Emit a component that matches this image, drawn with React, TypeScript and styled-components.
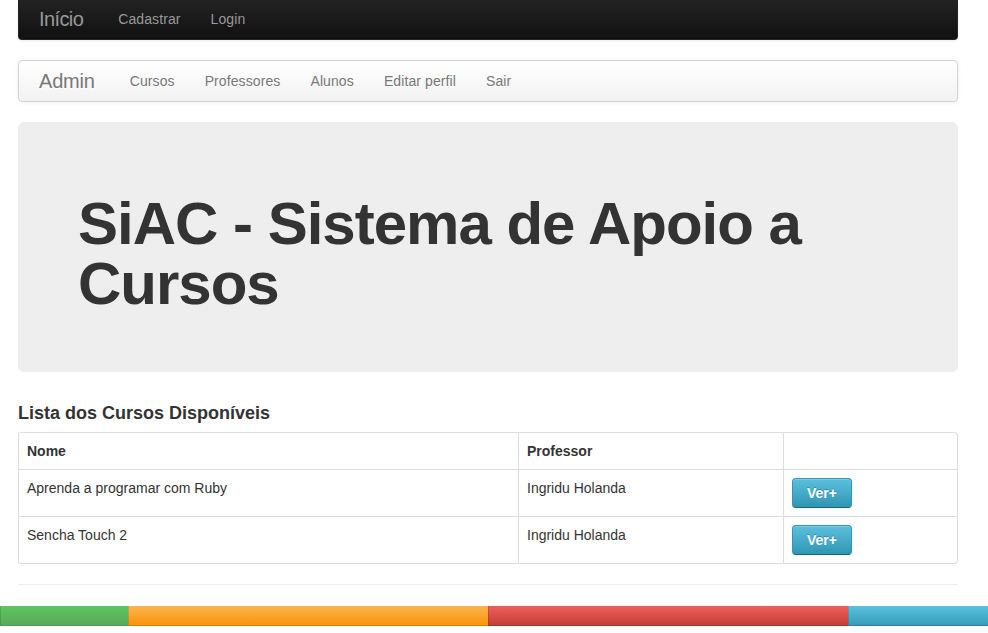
import React from "react";
import styled, { createGlobalStyle } from "styled-components";

const Global = createGlobalStyle`
  html, body { margin: 0; padding: 0; background: #fff; }
  body {
    font-family: "Liberation Sans", Arial, Helvetica, sans-serif;
    font-size: 14px;
    line-height: 20px;
    color: #333;
  }
  * { box-sizing: border-box; }
`;

const Page = styled.div`
  width: 988px;
  overflow: hidden;
`;

const Container = styled.div`
  width: 940px;
  margin: 0 18px;
`;

const Navbar = styled.nav<{ $inverse?: boolean }>`
  display: flex;
  align-items: center;
  height: ${(p) => (p.$inverse ? "40px" : "42px")};
  padding: 0 20px;
  margin-bottom: 20px;
  border: 1px solid ${(p) => (p.$inverse ? "#252525" : "#d4d4d4")};
  border-radius: ${(p) => (p.$inverse ? "0 0 4px 4px" : "4px")};
  border-top-width: ${(p) => (p.$inverse ? "0" : "1px")};
  background: ${(p) =>
    p.$inverse
      ? "linear-gradient(to bottom, #222222, #111111)"
      : "linear-gradient(to bottom, #ffffff, #f2f2f2)"};
  box-shadow: ${(p) =>
    p.$inverse ? "0 1px 3px rgba(0,0,0,0.08)" : "0 1px 4px rgba(0,0,0,0.065)"};
`;

const Brand = styled.a<{ $inverse?: boolean; $ls: number }>`
  font-size: 20px;
  font-weight: 200;
  line-height: 20px;
  letter-spacing: ${(p) => p.$ls}px;
  color: ${(p) => (p.$inverse ? "#999" : "#777")};
  text-decoration: none;
  margin-top: ${(p) => (p.$inverse ? "-1px" : "0")};
  margin-right: 20px;
  text-shadow: ${(p) => (p.$inverse ? "none" : "0 1px 0 #fff")};
`;

const NavLink = styled.a<{ $inverse?: boolean }>`
  padding: 10px 15px;
  margin-top: ${(p) => (p.$inverse ? "-1px" : "0")};
  font-size: 14px;
  line-height: 20px;
  letter-spacing: 0.1px;
  color: ${(p) => (p.$inverse ? "#999" : "#777")};
  text-decoration: none;
  text-shadow: ${(p) => (p.$inverse ? "none" : "0 1px 0 #fff")};
`;

const Hero = styled.div`
  height: 250px;
  padding: 72px 60px 0;
  margin-bottom: 30px;
  background: #eeeeee;
  border-radius: 6px;
`;

const HeroTitle = styled.h1`
  margin: 0;
  font-size: 60px;
  line-height: 60px;
  font-weight: bold;
  letter-spacing: -1px;
  color: #333;
`;

const SectionTitle = styled.h4`
  margin: 0 0 10px;
  padding-top: 1px;
  height: 20px;
  font-size: 18px;
  line-height: 20px;
  font-weight: bold;
  color: #333;
`;

const Table = styled.table`
  width: 100%;
  table-layout: fixed;
  border-collapse: separate;
  border-spacing: 0;
  border: 1px solid #ddd;
  border-left: 0;
  border-radius: 4px;
  margin-bottom: 20px;
`;

const Th = styled.th<{ $w?: number }>`
  width: ${(p) => (p.$w ? `${p.$w}px` : "auto")};
  padding: 8px;
  text-align: left;
  vertical-align: top;
  font-weight: bold;
  line-height: 20px;
  border-left: 1px solid #ddd;
`;

const Td = styled.td`
  padding: 8px;
  text-align: left;
  vertical-align: top;
  line-height: 20px;
  border-top: 1px solid #ddd;
  border-left: 1px solid #ddd;
`;

const InfoButton = styled.button`
  display: inline-block;
  height: 30px;
  padding: 4px 14px;
  font-family: inherit;
  font-size: 14px;
  font-weight: bold;
  line-height: 20px;
  color: #fff;
  text-shadow: 0 -1px 0 rgba(0, 0, 0, 0.25);
  background: linear-gradient(to bottom, #5bc0de, #2f96b4);
  border: 1px solid #2f96b4;
  border-bottom-color: #1f6377;
  border-radius: 4px;
  box-shadow: inset 0 1px 0 rgba(255, 255, 255, 0.2), 0 1px 2px rgba(0, 0, 0, 0.05);
  cursor: pointer;
`;

const Rule = styled.hr`
  margin: 20px 0;
  border: 0;
  border-top: 1px solid #eeeeee;
  border-bottom: 1px solid #ffffff;
`;

const Progress = styled.div`
  display: flex;
  width: 988px;
  height: 20px;
`;

const tones: Record<string, [string, string, string]> = {
  success: ["#62c462", "#57a957", "#4e9a4e"],
  warning: ["#fbb450", "#f89406", "#d77f06"],
  danger: ["#ee5f5b", "#c43c35", "#a8322c"],
  info: ["#5bc0de", "#339bb9", "#2a7f99"],
};

const Bar = styled.div<{ $w: number; $tone: string }>`
  width: ${(p) => p.$w}px;
  height: 20px;
  background: linear-gradient(
    to bottom,
    ${(p) => tones[p.$tone][0]},
    ${(p) => tones[p.$tone][1]}
  );
  box-shadow: inset 0 -1px 0 ${(p) => tones[p.$tone][2]},
    inset 1px 0 0 rgba(0, 0, 0, 0.12);
`;

const cursos = [
  { nome: "Aprenda a programar com Ruby", prof: "Ingridu Holanda" },
  { nome: "Sencha Touch 2", prof: "Ingridu Holanda" },
];

export default function App() {
  return (
    <Page>
      <Global />
      <Container>
        <Navbar $inverse>
          <Brand $inverse $ls={-0.6} href="#">Início</Brand>
          <NavLink $inverse href="#">Cadastrar</NavLink>
          <NavLink $inverse href="#">Login</NavLink>
        </Navbar>
        <Navbar>
          <Brand $ls={-0.2} href="#">Admin</Brand>
          <NavLink href="#">Cursos</NavLink>
          <NavLink href="#">Professores</NavLink>
          <NavLink href="#">Alunos</NavLink>
          <NavLink href="#">Editar perfil</NavLink>
          <NavLink href="#">Sair</NavLink>
        </Navbar>
        <Hero>
          <HeroTitle>SiAC - Sistema de Apoio a Cursos</HeroTitle>
        </Hero>
        <SectionTitle>Lista dos Cursos Disponíveis</SectionTitle>
        <Table>
          <thead>
            <tr>
              <Th $w={500}>Nome</Th>
              <Th $w={265}>Professor</Th>
              <Th></Th>
            </tr>
          </thead>
          <tbody>
            {cursos.map((c) => (
              <tr key={c.nome}>
                <Td>{c.nome}</Td>
                <Td>{c.prof}</Td>
                <Td>
                  <InfoButton>Ver+</InfoButton>
                </Td>
              </tr>
            ))}
          </tbody>
        </Table>
        <Rule />
      </Container>
      <Progress>
        <Bar $w={128} $tone="success" />
        <Bar $w={360} $tone="warning" />
        <Bar $w={360} $tone="danger" />
        <Bar $w={140} $tone="info" />
      </Progress>
    </Page>
  );
}
